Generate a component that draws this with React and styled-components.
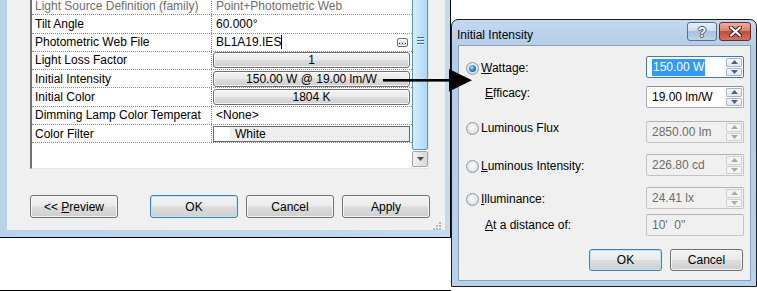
import React from 'react';
import styled, { createGlobalStyle, css } from 'styled-components';

const GlobalStyle = createGlobalStyle`
  body {
    margin: 0;
    background: #fff;
    font-family: 'Liberation Sans', Arial, sans-serif;
    font-size: 12px;
    color: #000;
  }
`;

const properties = [
  { label: 'Light Source Definition (family)', value: 'Point+Photometric Web', kind: 'muted' },
  { label: 'Tilt Angle', value: '60.000°' },
  { label: 'Photometric Web File', value: 'BL1A19.IES', kind: 'file' },
  { label: 'Light Loss Factor', value: '1', kind: 'button' },
  { label: 'Initial Intensity', value: '150.00 W @ 19.00 lm/W', kind: 'button' },
  { label: 'Initial Color', value: '1804 K', kind: 'button' },
  { label: 'Dimming Lamp Color Temperat', value: '<None>' },
  { label: 'Color Filter', value: 'White', kind: 'color' },
];

// top: gap above the row, shift: nudges the label against the field
const options = [
  { key: 'w', label: 'attage:', hot: 'W', value: '150.00 W', radio: true, checked: true, focused: true, top: 10, shift: 2 },
  { key: 'e', label: 'fficacy:', hot: 'E', value: '19.00 lm/W', indent: true, top: 8, shift: -8 },
  { key: 'f', label: 'Luminous Flux', value: '2850.00 lm', radio: true, disabled: true, top: 13, shift: -8 },
  { key: 'i', label: 'uminous Intensity:', hot: 'L', value: '226.80 cd', radio: true, disabled: true, top: 11, shift: 2 },
  { key: 'l', label: 'lluminance:', hot: 'I', value: '24.41 lx', radio: true, disabled: true, top: 11, shift: 2 },
  { key: 'd', label: 't a distance of:', hot: 'A', value: "10'  0\"", indent: true, disabled: true, noSpin: true, top: 5, shift: 0 },
];

const SpinArrow = ({ up, disabled }) => (
  <svg width="7" height="4" viewBox="0 0 7 4">
    <polygon
      points={up ? '0,4 3.5,0 7,4' : '0,0 7,0 3.5,4'}
      fill={disabled ? '#a9a9a9' : '#4c6188'}
    />
  </svg>
);

const App = () => {
  return (
    <>
      <GlobalStyle />
      <Stage>
        <LeftColumn>
          <PropsWindow>
            <WindowClient>
              <Grid>
                <RowList>
                  {properties.map((p) => (
                    <PropRow key={p.label}>
                      <LabelCell $muted={p.kind === 'muted'}>{p.label}</LabelCell>
                      <ValueCell $muted={p.kind === 'muted'}>
                        {p.kind === 'button' && <CellButton>{p.value}</CellButton>}
                        {p.kind === 'color' && (
                          <ColorBox>
                            <Swatch />
                            <span>{p.value}</span>
                          </ColorBox>
                        )}
                        {p.kind === 'file' && (
                          <>
                            <span>
                              {p.value}
                              <Caret />
                            </span>
                            <BrowseButton>
                              <svg width="7" height="1" viewBox="0 0 7 1">
                                <rect x="0" y="0" width="1" height="1" fill="#222" />
                                <rect x="3" y="0" width="1" height="1" fill="#222" />
                                <rect x="6" y="0" width="1" height="1" fill="#222" />
                              </svg>
                            </BrowseButton>
                          </>
                        )}
                        {(!p.kind || p.kind === 'muted') && p.value}
                      </ValueCell>
                    </PropRow>
                  ))}
                </RowList>
                <ScrollBar>
                  <Thumb>
                    <GripLines />
                    <GripLines />
                    <GripLines />
                  </Thumb>
                  <ScrollDown>
                    <svg width="7" height="4" viewBox="0 0 7 4">
                      <polygon points="0,0 7,0 3.5,4" fill="#4d4d4d" />
                    </svg>
                  </ScrollDown>
                </ScrollBar>
              </Grid>
              <ButtonBar>
                <PushButton>
                  &lt;&lt; <u>P</u>review
                </PushButton>
                <PushButton $focused $gap={32}>OK</PushButton>
                <PushButton $gap={8}>Cancel</PushButton>
                <PushButton $gap={8}>Apply</PushButton>
              </ButtonBar>
              <GripRow>
                <svg width="8" height="8" viewBox="0 0 8 8">
                  {[[6, 0], [6, 3], [3, 3], [6, 6], [3, 6], [0, 6]].map(([x, y]) => (
                    <rect key={`${x}-${y}`} x={x} y={y} width="2" height="2" fill="#b7b7b7" />
                  ))}
                </svg>
              </GripRow>
            </WindowClient>
          </PropsWindow>
        </LeftColumn>

        <Dialog>
          <TitleBar>
            <Title>Initial Intensity</Title>
            <CaptionButtons>
              <HelpButton>?</HelpButton>
              <CloseButton>
                <svg width="13" height="11" viewBox="0 0 13 11">
                  <path d="M2 1.5 L11 9.5 M11 1.5 L2 9.5" stroke="#4a1912" strokeWidth="4.2" strokeLinecap="round" />
                  <path d="M2 1.5 L11 9.5 M11 1.5 L2 9.5" stroke="#fff" strokeWidth="2.3" strokeLinecap="round" />
                </svg>
              </CloseButton>
            </CaptionButtons>
          </TitleBar>
          <DialogClient>
            {options.map((o) => (
              <OptionRow key={o.key} $top={o.top}>
                <OptionLabel $indent={o.indent} $shift={o.shift}>
                  {o.radio && <Radio $checked={o.checked} />}
                  <span>
                    {o.hot && <u>{o.hot}</u>}
                    {o.label}
                  </span>
                </OptionLabel>
                <Field $focused={o.focused} $disabled={o.disabled}>
                  <FieldText $disabled={o.disabled}>
                    {o.focused ? <Selected>{o.value}</Selected> : o.value}
                  </FieldText>
                  {!o.noSpin && (
                    <Spinner>
                      <SpinButton $disabled={o.disabled}>
                        <SpinArrow up disabled={o.disabled} />
                      </SpinButton>
                      <SpinButton $disabled={o.disabled}>
                        <SpinArrow disabled={o.disabled} />
                      </SpinButton>
                    </Spinner>
                  )}
                </Field>
              </OptionRow>
            ))}
            <DialogButtons>
              <PushButton $focused $width={73} $height={22}>OK</PushButton>
              <PushButton $width={73} $height={22} $gap={8}>Cancel</PushButton>
            </DialogButtons>
          </DialogClient>
        </Dialog>

        <Arrow width="757" height="291" viewBox="0 0 757 291">
          <rect x="383" y="79" width="70" height="2.6" fill="#000" />
          <polygon points="449,69 472,80.3 449,91.5" fill="#000" />
        </Arrow>
      </Stage>
    </>
  );
};

const Stage = styled.div`
  position: relative;
  width: 757px;
  height: 291px;
  overflow: hidden;
  background: #fff;
  display: flex;
  align-items: flex-start;
`;

const LeftColumn = styled.div`
  width: 451px;
  height: 291px;
  flex: none;
  box-sizing: border-box;
  border-bottom: 1px solid #000;
`;

const PropsWindow = styled.div`
  box-sizing: border-box;
  height: 238px;
  padding: 0 5px 7px 7px;
  border-right: 1px solid #000;
  border-bottom: 1px solid #000;
  background: linear-gradient(90deg, #b9d3ec, #c3dbf1);
  display: flex;
`;

const WindowClient = styled.div`
  flex: 1;
  background: #f0f0f0;
  padding-left: 23px;
  display: flex;
  flex-direction: column;
  overflow: hidden;
`;

const Grid = styled.div`
  margin-top: -4px;
  width: 399px;
  height: 173px;
  box-sizing: border-box;
  border-left: 2px solid #6f6f6f;
  border-top: 1px solid #6f6f6f;
  border-right: 1px solid #e3e3e3;
  border-bottom: 1px solid #e3e3e3;
  background: #fff;
  display: flex;
  flex: none;
`;

const RowList = styled.div`
  flex: 1;
  display: flex;
  flex-direction: column;
`;

const PropRow = styled.div`
  height: 18.29px;
  box-sizing: border-box;
  border-bottom: 1px dotted #8c8c8c;
  display: grid;
  grid-template-columns: 180px 1fr;
  flex: none;
`;

const LabelCell = styled.div`
  padding-left: 3px;
  border-right: 1px dotted #8c8c8c;
  white-space: nowrap;
  overflow: hidden;
  display: flex;
  align-items: center;
  color: ${({ $muted }) => ($muted ? '#6d6d6d' : '#000')};
`;

const ValueCell = styled.div`
  padding-left: 4px;
  padding-right: 4px;
  display: flex;
  align-items: center;
  justify-content: space-between;
  white-space: nowrap;
  color: ${({ $muted }) => ($muted ? '#6d6d6d' : '#000')};
  &:has(> button),
  &:has(> div) {
    padding: 0 2px 0 1px;
  }
`;

const buttonFace = css`
  background: linear-gradient(#f3f3f3 0%, #ebebeb 48%, #dddddd 52%, #cfcfcf 100%);
  border: 1px solid #707070;
  border-radius: 3px;
  box-shadow: inset 0 0 0 1px rgba(255, 255, 255, 0.75);
`;

const CellButton = styled.button`
  ${buttonFace}
  width: 100%;
  height: 16px;
  padding: 0;
  font: inherit;
  color: #000;
  line-height: 14px;
  text-align: center;
`;

const BrowseButton = styled.span`
  ${buttonFace}
  width: 11px;
  height: 9px;
  border-radius: 2px;
  box-sizing: border-box;
  display: flex;
  align-items: flex-end;
  justify-content: center;
  padding-bottom: 2px;
`;

const Caret = styled.span`
  display: inline-block;
  width: 1px;
  height: 14px;
  background: #000;
  vertical-align: -3px;
`;

const ColorBox = styled.div`
  width: 100%;
  height: 16px;
  box-sizing: border-box;
  border: 1px solid #6a6a6a;
  background: #efefef;
  display: flex;
  align-items: center;
  gap: 5px;
`;

const Swatch = styled.span`
  width: 16px;
  height: 100%;
  background: #fff;
`;

const ScrollBar = styled.div`
  width: 16px;
  display: flex;
  flex-direction: column;
  padding-bottom: 1px;
`;

const Thumb = styled.div`
  flex: 1;
  margin-bottom: 1px;
  box-sizing: border-box;
  border: 1px solid #5c93c4;
  border-radius: 2px;
  background: linear-gradient(90deg, #d9effc, #bfe3f9 50%, #aad8f5);
  display: flex;
  flex-direction: column;
  justify-content: center;
  align-items: center;
  gap: 2px;
  padding-bottom: 66px;
`;

const GripLines = styled.span`
  width: 7px;
  height: 1px;
  background: #3b6f9c;
  box-shadow: 0 1px 0 #e8f5fd;
`;

const ScrollDown = styled.div`
  height: 16px;
  box-sizing: border-box;
  border: 1px solid #a5a5a5;
  border-radius: 2px;
  background: linear-gradient(90deg, #f5f5f5, #e4e4e4 50%, #d8d8d8);
  display: flex;
  align-items: center;
  justify-content: center;
`;

const ButtonBar = styled.div`
  margin-top: 26px;
  display: flex;
`;

const PushButton = styled.button`
  ${buttonFace}
  width: ${({ $width }) => $width || 88}px;
  height: ${({ $height }) => $height || 23}px;
  margin-left: ${({ $gap }) => $gap || 0}px;
  padding: 0;
  font: inherit;
  color: #000;
  flex: none;
  ${({ $focused }) =>
    $focused &&
    css`
      border-color: #3c7fb1;
      box-shadow: inset 0 0 0 1px #bde6fb;
    `}
`;

const GripRow = styled.div`
  margin-top: auto;
  display: flex;
  justify-content: flex-end;
  padding: 0 4px 0 0;
  height: 8px;
`;

const Dialog = styled.div`
  margin-top: 19px;
  width: 306px;
  height: 268px;
  flex: none;
  box-sizing: border-box;
  border: 1px solid #1d1d1d;
  border-radius: 7px 7px 0 0;
  background: linear-gradient(#c4d9ef, #b4cbe5 30px, #b9d1ea);
  padding: 0 5px 5px 6px;
  display: flex;
  flex-direction: column;
`;

const TitleBar = styled.div`
  height: 25px;
  display: flex;
  align-items: flex-start;
  flex: none;
`;

const Title = styled.span`
  margin: 8px 0 0 -1px;
  font-size: 12px;
  color: #000;
`;

const CaptionButtons = styled.div`
  margin-left: auto;
  margin-top: 2px;
  display: flex;
  gap: 2px;
`;

const captionFace = css`
  height: 19px;
  box-sizing: border-box;
  border-radius: 3px;
  display: flex;
  align-items: center;
  justify-content: center;
`;

const HelpButton = styled.span`
  ${captionFace}
  width: 30px;
  border: 1px solid #57718f;
  background: linear-gradient(#e7eff8, #cddded 45%, #a9c2de 50%, #bcd2ea);
  color: #fff;
  font-weight: bold;
  font-size: 14px;
  text-shadow: 1px 0 #3f536b, -1px 0 #3f536b, 0 1px #3f536b, 0 -1px #3f536b;
`;

const CloseButton = styled.span`
  ${captionFace}
  width: 32px;
  border: 1px solid #6a2b24;
  background: linear-gradient(#eab0a4, #d8806f 45%, #c24b3a 50%, #d0725f);
`;

const DialogClient = styled.div`
  flex: 1;
  background: #f0f0f0;
  border: 1px solid #8aa1bb;
  padding: 0 6px 0 7px;
  display: flex;
  flex-direction: column;
`;

const OptionRow = styled.div`
  margin-top: ${({ $top }) => $top}px;
  height: 22px;
  display: flex;
  align-items: center;
  justify-content: space-between;
`;

const OptionLabel = styled.label`
  display: flex;
  align-items: center;
  gap: 2px;
  margin-left: ${({ $indent }) => ($indent ? 19 : 0)}px;
  margin-top: ${({ $shift }) => $shift}px;
  white-space: nowrap;
`;

const Radio = styled.span`
  width: 13px;
  height: 13px;
  box-sizing: border-box;
  border-radius: 50%;
  border: 1px solid #8d9aa6;
  background: radial-gradient(circle at 50% 45%, #ffffff 0, #ececec 45%, #c8c8c8 100%);
  position: relative;
  flex: none;
  ${({ $checked }) =>
    $checked &&
    css`
      &::after {
        content: '';
        position: absolute;
        inset: 2px;
        border-radius: 50%;
        background: radial-gradient(circle at 40% 35%, #b9ecff 0, #2a9ad8 40%, #0c4f86 90%);
      }
    `}
`;

const Field = styled.div`
  width: 98px;
  height: 22px;
  box-sizing: border-box;
  border: 1px solid ${({ $focused, $disabled }) => ($focused ? '#3d7bad' : $disabled ? '#c4c4c4' : '#abadb3')};
  border-top-color: ${({ $focused, $disabled }) => ($focused ? '#3d7bad' : $disabled ? '#b3b3b3' : '#8f9198')};
  border-radius: 2px;
  background: ${({ $disabled }) => ($disabled ? '#f0f0f0' : '#fff')};
  display: flex;
`;

const FieldText = styled.span`
  flex: 1;
  padding-left: 5px;
  line-height: 20px;
  color: ${({ $disabled }) => ($disabled ? '#6d6d6d' : '#000')};
  white-space: pre;
`;

const Selected = styled.span`
  background: #3399ff;
  color: #fff;
  padding: 1px 1px 2px 1px;
`;

const Spinner = styled.div`
  width: 16px;
  display: flex;
  flex-direction: column;
  gap: 1px;
  padding: 1px 1px 1px 0;
`;

const SpinButton = styled.span`
  flex: 1;
  border: 1px solid ${({ $disabled }) => ($disabled ? '#cfcfcf' : '#a8b5c6')};
  border-radius: 1px;
  background: ${({ $disabled }) => ($disabled ? '#f4f4f4' : 'linear-gradient(#f6f8fb, #e2e8f0)')};
  display: flex;
  align-items: center;
  justify-content: center;
`;

const DialogButtons = styled.div`
  margin-top: 13px;
  display: flex;
  justify-content: flex-end;
  padding-right: 1px;
`;

const Arrow = styled.svg`
  position: absolute;
  left: 0;
  top: 0;
  pointer-events: none;
`;

export default App;
